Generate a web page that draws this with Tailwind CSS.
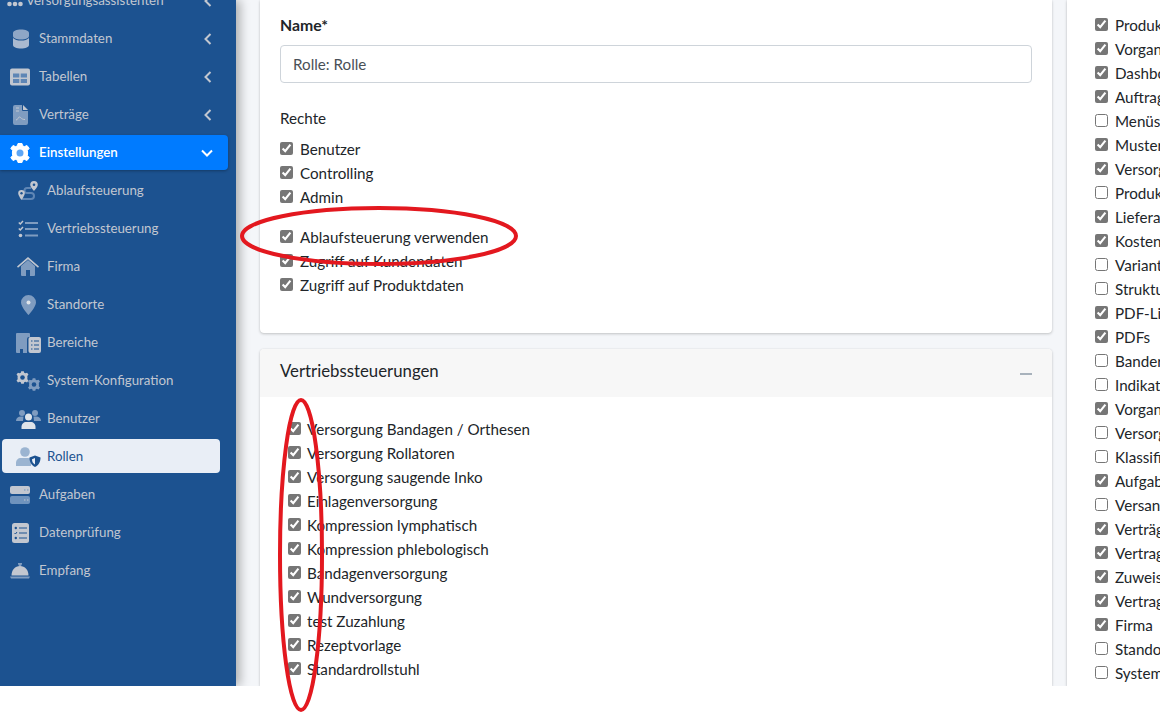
<!DOCTYPE html>
<html lang="de">
<head>
    <meta charset="utf-8" />
    <title>Rollen</title>
    <script src="https://cdn.jsdelivr.net/npm/@tailwindcss/browser@4"></script>
</head>
<body class="relative bg-white font-['Lato','Noto_Sans',sans-serif] text-[15.2px] text-[#212529] h-[713px] overflow-hidden">
    <div class="flex h-[686px] overflow-hidden bg-[#f4f6f9]">
        <!-- Sidebar -->
        <aside class="w-[236px] shrink-0 bg-[#1c5290] shadow-[4px_0_10px_rgba(0,0,0,0.3)] z-10 text-[13.3px] text-[#c2c7d0]">
            <nav class="-mt-[18px] flex flex-col">
                <a class="flex items-center h-[38px] pl-[6px] pr-[24px]">
                    <svg class="w-[20px] h-[14px]" viewBox="0 0 20 14" fill="#c2c7d0"><circle cx="3.500" cy="10" r="2.300"/><circle cx="9" cy="10" r="2.300"/><circle cx="14.500" cy="10" r="2.300"/><circle cx="9" cy="4" r="2.200" opacity=".5"/></svg>
                    <span class="flex-1 whitespace-nowrap">Versorgungsassistenten</span>
                    <svg class="w-[8px] h-[12px]" viewBox="0 0 8 12" fill="none" stroke="#c2c7d0" stroke-width="2"><path d="M6.500 1 1.500 6l5 5"/></svg>
                </a>
                <a class="flex items-center h-[38px] pl-[12px] pr-[24px]">
                    <svg class="w-[18px] h-[20px] mr-[9px]" viewBox="2 0 16 20"><path fill="#8ea6c6" d="M2 4c0-2 3.500-3.500 8-3.500S18 2 18 4v3c0 2-3.500 3.500-8 3.500S2 9 2 7z"/><path fill="#a9b9d0" d="M2 9c1.500 1.700 4.500 2.600 8 2.600S16.500 10.700 18 9v7c0 2-3.500 3.500-8 3.500S2 18 2 16z"/></svg>
                    <span class="flex-1">Stammdaten</span>
                    <svg class="w-[8px] h-[12px]" viewBox="0 0 8 12" fill="none" stroke="#c2c7d0" stroke-width="2"><path d="M6.500 1 1.500 6l5 5"/></svg>
                </a>
                <a class="flex items-center h-[38px] pl-[10px] pr-[24px]">
                    <svg class="w-[20px] h-[18px] mr-[9px]" viewBox="0 0 20 18"><rect width="20" height="17" y=".5" rx="2" fill="#c2c7d0"/><path fill="#5f86b5" d="M3 5.500h6.300v4H3zM10.700 5.500H17v4h-6.300zM3 11h6.300v4H3zM10.700 11H17v4h-6.300z"/></svg>
                    <span class="flex-1">Tabellen</span>
                    <svg class="w-[8px] h-[12px]" viewBox="0 0 8 12" fill="none" stroke="#c2c7d0" stroke-width="2"><path d="M6.500 1 1.500 6l5 5"/></svg>
                </a>
                <a class="flex items-center h-[38px] pl-[13px] pr-[24px]">
                    <svg class="w-[15px] h-[20px] mr-[11px]" viewBox="0 0 15 20"><path fill="#7f9cc0" d="M2 0h7v5a1 1 0 0 0 1 1h5v12a2 2 0 0 1-2 2H2a2 2 0 0 1-2-2V2a2 2 0 0 1 2-2z"/><path fill="#c2c7d0" d="M10 0l5 5h-5z"/><path stroke="#c2c7d0" fill="none" d="M3 15c2 0 2-3 3.500-3s1.500 2.500 5.500 2.500M3 3h3M3 6h3"/></svg>
                    <span class="flex-1">Verträge</span>
                    <svg class="w-[8px] h-[12px]" viewBox="0 0 8 12" fill="none" stroke="#c2c7d0" stroke-width="2"><path d="M6.500 1 1.500 6l5 5"/></svg>
                </a>
                <a class="flex items-center h-[35px] mt-[1px] mb-[2px] pl-[10px] pr-[15px] mr-[8px] bg-[#007bff] text-white font-semibold rounded-r-[4px] shadow-[0_1px_3px_rgba(0,0,0,0.3)]">
                    <svg class="w-[20px] h-[20px] mr-[9px]" viewBox="0 0 20 20"><path fill="#fff" stroke="#fff" stroke-linejoin="round" d="M8 .5h4l.6 2.300 1.800.8L17 2.500l2.200 2.800-1.800 2.200.2 2.500-.2 2.500 1.800 2.200-2.200 2.800-2.600-1.100-1.800.8-.6 2.300H8l-.6-2.300-1.800-.8L3 17.500.8 14.700l1.800-2.200-.2-2.500.2-2.500L.8 5.300 3 2.500l2.600 1.100 1.800-.8z"/><circle cx="10" cy="10" r="3.500" fill="#5ea6f5"/></svg>
                    <span class="flex-1">Einstellungen</span>
                    <svg class="w-[12px] h-[8px]" viewBox="0 0 12 8" fill="none" stroke="#fff" stroke-width="2"><path d="M1 1.500 6 6.500l5-5"/></svg>
                </a>
                <a class="flex items-center h-[38px] pl-[18px]">
                    <svg class="w-[20px] h-[20px] mr-[9px]" viewBox="0 0 20 20"><path fill="none" stroke="#5f86b5" stroke-width="2" d="M4 18h9a2.500 2.500 0 0 0 0-6H9a2.500 2.500 0 0 1 0-5h4"/><path fill="#c2c7d0" d="M16 0a3.800 3.800 0 0 1 3.800 3.800C19.800 6 16 10 16 10s-3.800-4-3.800-6.200A3.800 3.800 0 0 1 16 0z"/><path fill="#c2c7d0" d="M3.500 9A3.300 3.300 0 0 1 6.800 12.300C6.800 14.500 3.500 19 3.500 19S.2 14.500.2 12.300A3.300 3.300 0 0 1 3.500 9z"/><circle cx="16" cy="3.800" r="1.300" fill="#1c5290"/><circle cx="3.500" cy="12.300" r="1.200" fill="#1c5290"/></svg>
                    <span>Ablaufsteuerung</span>
                </a>
                <a class="flex items-center h-[38px] pl-[18px]">
                    <svg class="w-[20px] h-[18px] mr-[9px]" viewBox="0 0 20 18"><path fill="none" stroke="#c2c7d0" stroke-width="1.500" d="M.8 2.500l1.500 1.500L5 1M.8 8.500 2.300 10 5 7"/><circle cx="2.500" cy="15.500" r="1.800" fill="#c2c7d0"/><path stroke="#7f9cc0" stroke-width="2" d="M7 3h13M7 9h13M7 15.500h13"/></svg>
                    <span>Vertriebssteuerung</span>
                </a>
                <a class="flex items-center h-[38px] pl-[17px]">
                    <svg class="w-[22px] h-[20px] mr-[8px]" viewBox="0 0 22 20"><path fill="#7f9cc0" d="M4 9l7-6 7 6v9a1 1 0 0 1-1 1h-4v-6H9v6H5a1 1 0 0 1-1-1z"/><path fill="#c2c7d0" d="M11 0 22 9.500l-1 1.200L11 2.300 1 10.700 0 9.500z"/></svg>
                    <span>Firma</span>
                </a>
                <a class="flex items-center h-[38px] pl-[21px]">
                    <svg class="w-[15px] h-[20px] mr-[11px]" viewBox="0 0 15 20"><path fill="#7f9cc0" d="M7.500 0A7.500 7.500 0 0 1 15 7.500C15 12 7.500 20 7.500 20S0 12 0 7.500A7.500 7.500 0 0 1 7.500 0z"/><circle cx="7.500" cy="7.500" r="2" fill="#dfe4ea"/></svg>
                    <span>Standorte</span>
                </a>
                <a class="flex items-center h-[38px] pl-[16px]">
                    <svg class="w-[25px] h-[20px] mr-[6px]" viewBox="0 0 25 20"><path fill="#7f9cc0" d="M0 1a1 1 0 0 1 1-1h12a1 1 0 0 1 1 1v3h-1a2 2 0 0 0-2 2v14H7v-4H4v4H1a1 1 0 0 1-1-1z"/><rect x="12.500" y="4" width="12.500" height="16" rx="2" fill="#c2c7d0"/><path stroke="#1c5290" d="M15 8h1.500M18 8h5M15 12h1.500M18 12h5M15 16h1.500M18 16h5"/></svg>
                    <span>Bereiche</span>
                </a>
                <a class="flex items-center h-[38px] pl-[16px]">
                    <svg class="w-[25px] h-[20px] mr-[6px]" viewBox="0 0 25 20">
                        <g transform="scale(.65)" fill="#c2c7d0"><path d="M8 .5h4l.6 2.300 1.800.8L17 2.500l2.200 2.800-1.800 2.200.2 2.500-.2 2.500 1.800 2.200-2.200 2.800-2.600-1.100-1.800.8-.6 2.300H8l-.6-2.300-1.800-.8L3 17.500.8 14.700l1.800-2.200-.2-2.500.2-2.500L.8 5.300 3 2.500l2.600 1.100 1.800-.8z"/><circle cx="10" cy="10" r="3.500" fill="#1c5290"/></g>
                        <g transform="translate(11.500 7) scale(.65)" fill="#7f9cc0"><path d="M8 .5h4l.6 2.300 1.800.8L17 2.500l2.200 2.800-1.800 2.200.2 2.500-.2 2.500 1.800 2.200-2.200 2.800-2.600-1.100-1.800.8-.6 2.300H8l-.6-2.300-1.800-.8L3 17.500.8 14.700l1.800-2.200-.2-2.500.2-2.500L.8 5.300 3 2.500l2.600 1.100 1.800-.8z"/><circle cx="10" cy="10" r="3.500" fill="#1c5290"/></g>
                    </svg>
                    <span>System-Konfiguration</span>
                </a>
                <a class="flex items-center h-[38px] pl-[16px]">
                    <svg class="w-[25px] h-[20px] mr-[6px]" viewBox="0 0 25 20"><circle cx="6" cy="4" r="3" fill="#7f9cc0"/><circle cx="19" cy="4" r="3" fill="#7f9cc0"/><path fill="#7f9cc0" d="M0 12c0-3 2-4.500 5-4.500h2.500L7 12zM25 12c0-3-2-4.500-5-4.500h-2.500L18 12z"/><circle cx="12.500" cy="8" r="3.500" fill="#dfe4ea"/><path fill="#dfe4ea" d="M5.500 20v-2c0-3 2-5 5-5h4c3 0 5 2 5 5v2z"/></svg>
                    <span>Benutzer</span>
                </a>
                <a class="flex items-center h-[34px] mt-[1px] ml-[2px] mr-[16px] pl-[14px] pt-[2px] bg-[#e9eef6] text-[#1c5290] rounded-[4px]">
                    <svg class="w-[25px] h-[20px] mr-[6px]" viewBox="0 0 25 20"><circle cx="9" cy="5" r="4.800" fill="#9bb4d1"/><path fill="#9bb4d1" d="M0 19v-3c0-3 2-5 5-5h7c1 0 2 .300 3 1v7z"/><path fill="#1c5290" d="M19 8.500l5.500 2c0 4-1.500 7.500-5.500 9.500-4-2-5.500-5.500-5.500-9.500z"/><path fill="#e9eef6" d="M19 11v6.500c-2-1-3-3-3-5.300z"/></svg>
                    <span>Rollen</span>
                </a>
                <a class="flex items-center h-[38px] mt-[3px] pl-[10px]">
                    <svg class="w-[20px] h-[18px] mr-[9px]" viewBox="0 0 20 18"><rect width="20" height="8" rx="2" fill="#c2c7d0"/><rect y="10" width="20" height="8" rx="2" fill="#6f93bd"/><path stroke="#6f93bd" d="M14 4h1.500M17 4h1.500"/><path stroke="#c2c7d0" d="M14 14h1.500M17 14h1.500"/></svg>
                    <span>Aufgaben</span>
                </a>
                <a class="flex items-center h-[38px] pl-[12px]">
                    <svg class="w-[17px] h-[20px] mr-[10px]" viewBox="0 0 17 20"><rect width="17" height="20" rx="2.500" fill="#c2c7d0"/><path stroke="#1c5290" d="M7 5h8M7 10h8M7 15h8"/><circle cx="3.800" cy="5" r="1.200" fill="#1c5290"/><circle cx="3.800" cy="15" r="1.200" fill="#1c5290"/><path stroke="#1c5290" fill="none" d="M2.500 10l1 1 1.500-2"/></svg>
                    <span>Datenprüfung</span>
                </a>
                <a class="flex items-center h-[38px] pl-[10px]">
                    <svg class="w-[20px] h-[16px] mr-[9px]" viewBox="0 0 20 16"><path fill="#c2c7d0" d="M1.500 12.500C1.500 7 5 3 10 3s8.500 4 8.500 9.500z"/><path fill="#7f9cc0" d="M0 13.500h20L19 15.500H1zM8 0h4v1l-1 2H9L8 1z"/></svg>
                    <span>Empfang</span>
                </a>
            </nav>
        </aside>

        <!-- Content -->
        <main class="flex-1 flex pl-[24px] gap-[15px] min-w-0 overflow-hidden">
            <div class="w-[792px] shrink-0 flex flex-col gap-[16px]">
                <section class="h-[333px] bg-white rounded-b-[4px] shadow-[0_0_1px_rgba(0,0,0,0.13),0_1px_3px_rgba(0,0,0,0.2)] pt-[13px] px-[20px]">
                    <label class="block font-bold leading-[24px] text-[15.8px]">Name*</label>
                    <input type="text" value="Rolle: Rolle" class="mt-[8px] block w-full h-[38px] px-[12px] border border-[#ced4da] rounded-[4px] text-[#495057] bg-white" />
                    <p class="mt-[23px] leading-[24px]">Rechte</p>
                    <div class="mt-[7px]">
                        <label class="flex items-center h-[24px] gap-[7px]"><input type="checkbox" checked class="size-[13px] mb-[2px] accent-[#767676]" />Benutzer</label>
                        <label class="flex items-center h-[24px] gap-[7px]"><input type="checkbox" checked class="size-[13px] mb-[2px] accent-[#767676]" />Controlling</label>
                        <label class="flex items-center h-[24px] gap-[7px]"><input type="checkbox" checked class="size-[13px] mb-[2px] accent-[#767676]" />Admin</label>
                        <label class="flex items-center h-[24px] gap-[7px] mt-[16px]"><input type="checkbox" checked class="size-[13px] mb-[2px] accent-[#767676]" />Ablaufsteuerung verwenden</label>
                        <label class="flex items-center h-[24px] gap-[7px]"><input type="checkbox" checked class="size-[13px] mb-[2px] accent-[#767676]" />Zugriff auf Kundendaten</label>
                        <label class="flex items-center h-[24px] gap-[7px]"><input type="checkbox" checked class="size-[13px] mb-[2px] accent-[#767676]" />Zugriff auf Produktdaten</label>
                    </div>
                </section>
                <section class="flex-1 bg-white rounded-t-[4px] shadow-[0_0_1px_rgba(0,0,0,0.13),0_1px_3px_rgba(0,0,0,0.2)]">
                    <header class="flex items-center justify-between h-[48px] px-[20px] pb-[4px] bg-[#f7f7f7] rounded-t-[4px]">
                        <h3 class="text-[16.8px]">Vertriebssteuerungen</h3>
                        <span class="w-[12px] h-[2px] bg-[#a8b2bc] mt-[6px]"></span>
                    </header>
                    <div id="vertrieb" class="pt-[20px] pl-[28px]"></div>
                </section>
            </div>
            <section class="flex-1 bg-white shadow-[0_0_1px_rgba(0,0,0,0.13),0_1px_3px_rgba(0,0,0,0.2)] pl-[28px] pt-[13px] overflow-hidden">
                <div id="module"></div>
            </section>
        </main>
    </div>

    <!-- Annotations -->
    <svg class="absolute inset-0 pointer-events-none z-20" width="1160" height="713" fill="none" stroke="#e3181f" stroke-width="4">
        <ellipse cx="379" cy="236" rx="137" ry="28" />
        <ellipse cx="301" cy="555" rx="21" ry="155" />
    </svg>

    <script>
        const vertrieb = ['Versorgung Bandagen / Orthesen', 'Versorgung Rollatoren', 'Versorgung saugende Inko', 'Einlagenversorgung', 'Kompression lymphatisch', 'Kompression phlebologisch', 'Bandagenversorgung', 'Wundversorgung', 'test Zuzahlung', 'Rezeptvorlage', 'Standardrollstuhl'];
        const module_ = [['Produkte', 1], ['Vorgangstypen', 1], ['Dashboard', 1], ['Auftragsarten', 1], ['Menüs', 0], ['Mustervorlagen', 1], ['Versorgungen', 1], ['Produktgruppen', 0], ['Lieferanten', 1], ['Kostenträger', 1], ['Varianten', 0], ['Struktur', 0], ['PDF-Listen', 1], ['PDFs', 1], ['Bandername', 0], ['Indikationen', 0], ['Vorgangsarten', 1], ['Versorgungsarten', 0], ['Klassifikation', 0], ['Aufgaben', 1], ['Versand', 0], ['Verträge', 1], ['Vertragsarten', 1], ['Zuweiser', 1], ['Vertragspartner', 1], ['Firma', 1], ['Standorte', 0], ['System', 0]];

        document.getElementById('vertrieb').innerHTML = vertrieb.map(v =>
            `<label class="flex items-center h-[24px] gap-[6px] whitespace-nowrap"><input type="checkbox" checked class="size-[13px] mb-[2px] accent-[#767676]" />${v}</label>`).join('');
        document.getElementById('module').innerHTML = module_.map(([v, on]) =>
            `<label class="flex items-center h-[24px] gap-[7px] whitespace-nowrap"><input type="checkbox" ${on ? 'checked' : ''} class="size-[13px] mb-[2px] accent-[#767676]" />${v}</label>`).join('');
    </script>
</body>
</html>
